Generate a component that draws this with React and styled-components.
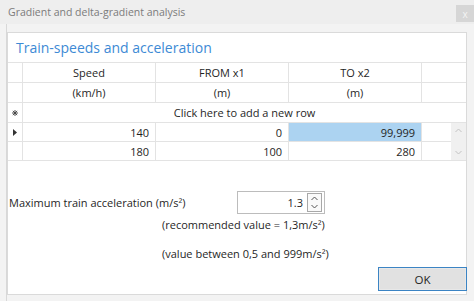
import React from 'react';
import styled, { createGlobalStyle } from 'styled-components';

const GlobalStyle = createGlobalStyle`
  html, body {
    margin: 0;
    padding: 0;
    background: #f0f0f0;
  }
  body {
    font-family: "Open Sans", "Noto Sans", sans-serif;
    color: #1f1f1f;
  }
`;

const Window = styled.div`
  width: 474px;
  height: 301px;
  display: flex;
  flex-direction: column;
  background: #f3f3f3;
  overflow: hidden;
`;

const TitleBar = styled.div`
  height: 24px;
  flex: none;
  display: flex;
  align-items: center;
  background: #eeeeee;
  padding-left: 8px;
  font-size: 10.5px;
  color: #7b7b7b;
`;

const Title = styled.span`
  flex: 1;
`;

const CloseButton = styled.div`
  align-self: flex-start;
  margin-top: 5px;
  width: 18px;
  height: 17px;
  background: #d6d6d6;
  color: #f4f4f4;
  font-size: 10px;
  display: flex;
  align-items: center;
  justify-content: center;
`;

const Body = styled.div`
  flex: 1;
  display: flex;
  padding: 8px 7px 6px 0;
  margin-left: 6px;
  border-left: 1px solid #d8d8d8;
`;

const Panel = styled.div`
  flex: 1;
  display: flex;
  flex-direction: column;
  background: #ffffff;
  border: 1px solid #dadada;
`;

const Heading = styled.div`
  height: 29px;
  flex: none;
  padding-left: 8px;
  display: flex;
  align-items: center;
  font-size: 14px;
  color: #3d8ad5;
`;

const Grid = styled.div`
  display: flex;
  flex-direction: column;
  font-size: 11px;
  border-top: 1px solid #e3e3e3;
`;

const Row = styled.div`
  display: flex;
  height: ${p => p.$h || 19}px;
  border-bottom: 1px solid #e3e3e3;
`;

const Cell = styled.div`
  width: ${p => p.$w}px;
  flex: ${p => (p.$grow ? 1 : 'none')};
  box-sizing: border-box;
  border-right: ${p => (p.$noLine ? 'none' : '1px solid #e3e3e3')};
  display: flex;
  align-items: center;
  justify-content: ${p => (p.$right ? 'flex-end' : 'center')};
  padding-right: ${p => (p.$right ? '6px' : '0')};
  background: ${p => (p.$selected ? '#acd3f1' : 'transparent')};
`;

const DataArea = styled.div`
  display: flex;
`;

const DataRows = styled.div`
  width: 443px;
  display: flex;
  flex-direction: column;
`;

const ScrollBar = styled.div`
  flex: 1;
  background: #f0f0f0;
  display: flex;
  flex-direction: column;
  justify-content: space-between;
  align-items: center;
  padding: 5px 0;
  border-bottom: 1px solid #e3e3e3;
`;

const Form = styled.div`
  display: flex;
  flex-direction: column;
  font-size: 11px;
  flex: 1;
`;

const AccRow = styled.div`
  display: flex;
  align-items: center;
  margin-top: 30px;
  padding-left: 1px;
`;

const Label = styled.span`
  width: 228px;
`;

const Spinner = styled.div`
  width: 88px;
  height: 23px;
  box-sizing: border-box;
  border: 1px solid #bcbcbc;
  display: flex;
  align-items: center;
  justify-content: flex-end;
  padding-right: 2px;
`;

const SpinValue = styled.span`
  margin-right: 4px;
`;

const SpinButtons = styled.div`
  width: 15px;
  height: 19px;
  box-sizing: border-box;
  border: 1px solid #a8a8a8;
  display: flex;
  flex-direction: column;
  align-items: center;
  justify-content: space-around;
  background: #fafafa;
`;

const Note = styled.div`
  padding-left: 154px;
  margin-top: ${p => p.$top}px;
  line-height: 16px;
`;

const Footer = styled.div`
  margin-top: auto;
  margin-bottom: 3px;
  display: flex;
  justify-content: flex-end;
`;

const OkButton = styled.div`
  width: 89px;
  height: 24px;
  box-sizing: border-box;
  margin-right: -1px;
  border: 1px solid #3b84c4;
  background: #e1e1e1;
  box-shadow: inset 0 0 0 1px #e8e8e8;
  display: flex;
  align-items: center;
  justify-content: center;
  font-size: 11.5px;
`;

const Chevron = ({ up, color = '#a6a6a6', w = 7 }) => (
  <svg width={w} height="5" viewBox="0 0 7 5">
    <path d={up ? 'M0.5 4L3.5 1L6.5 4' : 'M0.5 1L3.5 4L6.5 1'} fill="none" stroke={color} strokeWidth="1" />
  </svg>
);

const NewRowStar = () => (
  <svg width="6" height="6" viewBox="0 0 7 7">
    <path d="M3.5 0V7M0 3.5H7M1 1L6 6M6 1L1 6" stroke="#444" strokeWidth="1.1" />
  </svg>
);

const CurrentArrow = () => (
  <svg width="4" height="7" viewBox="0 0 4 7">
    <path d="M0 0L4 3.5L0 7Z" fill="#333" />
  </svg>
);

const rows = [
  { speed: 140, from: 0, to: '99,999', current: true },
  { speed: 180, from: 100, to: '280' },
];

export default function App() {
  return (
    <Window>
      <GlobalStyle />
      <TitleBar>
        <Title>Gradient and delta-gradient analysis</Title>
        <CloseButton>x</CloseButton>
      </TitleBar>
      <Body>
        <Panel>
          <Heading>Train-speeds and acceleration</Heading>
          <Grid>
            <Row $h={19}>
              <Cell $w={15} />
              <Cell $w={133}>Speed</Cell>
              <Cell $w={133}>FROM x1</Cell>
              <Cell $w={133}>TO x2</Cell>
              <Cell $grow $noLine />
            </Row>
            <Row $h={19}>
              <Cell $w={15} />
              <Cell $w={133}>(km/h)</Cell>
              <Cell $w={133}>(m)</Cell>
              <Cell $w={133}>(m)</Cell>
              <Cell $grow $noLine />
            </Row>
            <Row $h={19}>
              <Cell $w={15}><NewRowStar /></Cell>
              <Cell $grow $noLine>Click here to add a new row</Cell>
            </Row>
            <DataArea>
              <DataRows>
                {rows.map(r => (
                  <Row key={r.speed} $h={18}>
                    <Cell $w={15}>{r.current && <CurrentArrow />}</Cell>
                    <Cell $w={133} $right>{r.speed}</Cell>
                    <Cell $w={133} $right>{r.from}</Cell>
                    <Cell $w={133} $right $selected={r.current}>{r.to}</Cell>
                    <Cell $grow $noLine />
                  </Row>
                ))}
              </DataRows>
              <ScrollBar>
                <Chevron up color="#c2c2c2" />
                <Chevron color="#c2c2c2" />
              </ScrollBar>
            </DataArea>
          </Grid>
          <Form>
            <AccRow>
              <Label>Maximum train acceleration (m/s²)</Label>
              <Spinner>
                <SpinValue>1.3</SpinValue>
                <SpinButtons>
                  <Chevron up color="#555" />
                  <Chevron color="#555" />
                </SpinButtons>
              </Spinner>
            </AccRow>
            <Note $top={3}>(recommended value = 1,3m/s²)</Note>
            <Note $top={13}>(value between 0,5 and 999m/s²)</Note>
            <Footer>
              <OkButton>OK</OkButton>
            </Footer>
          </Form>
        </Panel>
      </Body>
    </Window>
  );
}
